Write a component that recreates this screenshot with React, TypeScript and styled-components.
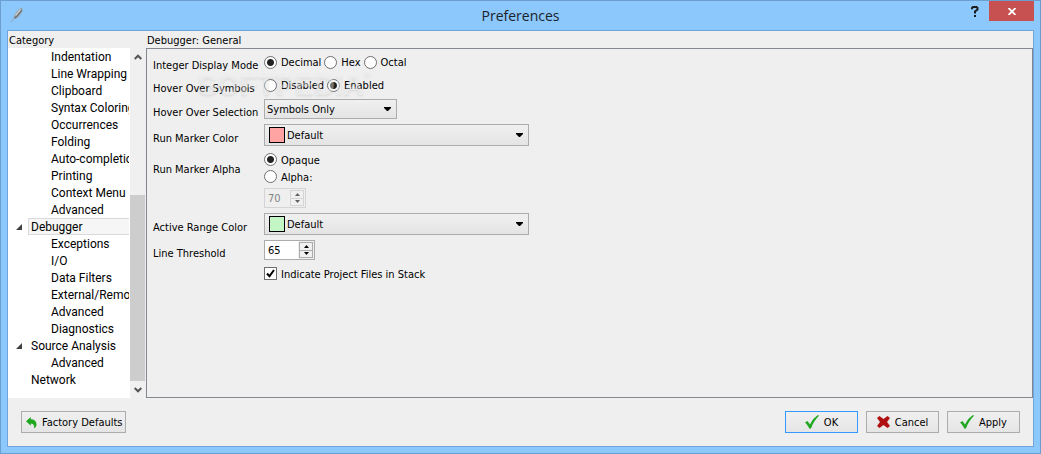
import React, { useState } from "react";
import styled, { createGlobalStyle } from "styled-components";

const GlobalStyle = createGlobalStyle`
  * { box-sizing: border-box; }
  body { margin: 0; }
  body, button, input, select {
    font-family: "DejaVu Sans Condensed", Tahoma, sans-serif;
    font-size: 11px;
    line-height: 14px;
    color: #000;
  }
`;

const Window = styled.div`
  display: flex;
  flex-direction: column;
  min-height: 100vh;
  padding: 0 6px 6px;
  border: 1px solid #6a9fd0;
  background: #8cc8fb;
`;

const TitleBar = styled.header`
  display: grid;
  grid-template-columns: 1fr auto 1fr;
  height: 29px;
`;

const TitleIcon = styled.svg`
  width: 16px;
  height: 18px;
  margin: 5px 2px;
`;

const Title = styled.h1`
  margin: 0;
  font: 400 14px/29px "Open Sans", "Segoe UI", sans-serif;
  color: #1a222b;
`;

const WindowControls = styled.div`
  display: flex;
  justify-content: flex-end;
  align-items: flex-start;
`;

const ControlButton = styled.button<{ $close?: boolean }>`
  display: flex;
  align-items: center;
  justify-content: center;
  width: ${(p) => (p.$close ? 45 : 28)}px;
  height: 20px;
  padding: 0;
  border: 0;
  background: ${(p) => (p.$close ? "#c75050" : "transparent")};
`;

const Client = styled.main`
  display: flex;
  flex-direction: column;
  flex: 1;
  border: 1px solid #6fa5dc;
  background: #efefef;
`;

const Columns = styled.div`
  display: flex;
  flex: 1;
`;

const Sidebar = styled.nav`
  display: flex;
  flex-direction: column;
  width: 138px;
  flex: none;
`;

const Heading = styled.h2`
  height: 17px;
  margin: 0;
  padding: 3px 1px 0;
  font-size: 11px;
  line-height: 14px;
  font-weight: 400;
`;

const TreeArea = styled.div`
  display: flex;
  flex: 1;
  padding-right: 1px;
`;

const Tree = styled.ul`
  flex: 1;
  min-width: 0;
  margin: 0;
  padding: 0 1px 0 0;
  list-style: none;
  overflow: hidden;
  background: #fff;
`;

const TreeItem = styled.li<{ $parent?: boolean }>`
  display: grid;
  grid-template-columns: ${(p) => (p.$parent ? 20 : 40)}px 1fr;
  align-items: center;
  height: 17px;
  overflow: hidden;
  white-space: nowrap;
`;

const TreeLink = styled.a<{ $selected?: boolean }>`
  height: 17px;
  padding: 0 2px;
  border: 1px solid ${(p) => (p.$selected ? "#dadada" : "transparent")};
  border-right: 0;
  background: ${(p) => (p.$selected ? "#f6f6f6" : "transparent")};
  font: 400 12px/16px Roboto, "Segoe UI", sans-serif;
  color: #000;
  text-decoration: none;
`;

const Twisty = styled.svg`
  width: 6px;
  height: 6px;
  margin-left: 8px;
`;

const ScrollBar = styled.div`
  display: flex;
  flex-direction: column;
  width: 15px;
  background: #f0f0f0;
`;

const ScrollButton = styled.button`
  display: flex;
  align-items: center;
  justify-content: center;
  height: 17px;
  padding: 0;
  border: 0;
  background: transparent;
`;

const Track = styled.div`
  display: flex;
  flex-direction: column;
  justify-content: flex-end;
  flex: 1;
`;

const Thumb = styled.div`
  height: 59%;
  background: #cdcdcd;
`;

const Content = styled.section`
  display: flex;
  flex-direction: column;
  flex: 1;
`;

const Panel = styled.form`
  position: relative;
  display: flex;
  flex-direction: column;
  gap: 5px;
  flex: 1;
  padding: 4px 6px;
  border: 1px solid #828790;
`;

const Row = styled.div<{ $top?: boolean }>`
  display: grid;
  grid-template-columns: 111px 1fr;
  align-items: ${(p) => (p.$top ? "start" : "center")};
`;

const RowLabel = styled.label<{ $top?: boolean }>`
  margin: ${(p) => (p.$top ? "12px 0 0" : "0 0 -2px")};
  padding-top: ${(p) => (p.$top ? 0 : 6)}px;
  white-space: nowrap;
`;

const Choices = styled.div`
  display: flex;
  align-items: center;
  gap: 3px;
  height: 18px;
`;

const Stack = styled.div`
  display: flex;
  flex-direction: column;
  align-items: flex-start;
`;

const Choice = styled.label`
  display: flex;
  align-items: center;
  gap: 4px;
  height: 17px;
  white-space: nowrap;
`;

const Caption = styled.span`
  padding-top: 2px;
`;

const Radio = styled.input.attrs({ type: "radio" })`
  appearance: none;
  width: 13px;
  height: 13px;
  margin: 0;
  border: 1px solid #707070;
  border-radius: 50%;
  background: #fff;
  &:checked {
    background: radial-gradient(circle, #222 0 3px, #fff 4px);
  }
`;

const CheckBox = styled.span`
  display: grid;
  width: 13px;
  height: 13px;
  > * {
    grid-area: 1 / 1;
  }
  > input {
    appearance: none;
    width: 13px;
    height: 13px;
    margin: 0;
    border: 1px solid #707070;
    background: #fff;
  }
  > svg {
    z-index: 1;
    pointer-events: none;
  }
  > input:not(:checked) + svg {
    visibility: hidden;
  }
`;

const SelectBox = styled.div<{ $wide?: boolean }>`
  position: relative;
  width: ${(p) => (p.$wide ? 265 : 133)}px;
  height: ${(p) => (p.$wide ? 22 : 20)}px;
`;

const Select = styled.select<{ $wide?: boolean }>`
  appearance: none;
  display: block;
  width: 100%;
  height: 100%;
  padding: 2px 20px 0 ${(p) => (p.$wide ? 22 : 2)}px;
  border: 1px solid #acacac;
  border-radius: 0;
  background: linear-gradient(#f0f0f0, #e4e4e4);
`;

const Arrow = styled.svg`
  position: absolute;
  top: 50%;
  right: 6px;
  width: 7px;
  height: 4px;
  margin-top: -2px;
  pointer-events: none;
`;

const Swatch = styled.span<{ $color: string }>`
  position: absolute;
  top: 3px;
  left: 5px;
  width: 16px;
  height: 16px;
  border: 1px solid #000;
  background: ${(p) => p.$color};
  pointer-events: none;
`;

const Spin = styled.div<{ $disabled?: boolean }>`
  display: flex;
  width: ${(p) => (p.$disabled ? 42 : 51)}px;
  height: 20px;
  margin-top: ${(p) => (p.$disabled ? 3 : 0)}px;
  border: 1px solid ${(p) => (p.$disabled ? "#d4d4d4" : "#acacac")};
  background: ${(p) => (p.$disabled ? "#efefef" : "#fff")};
`;

const SpinInput = styled.input`
  flex: 1;
  min-width: 0;
  padding: 2px 3px 0;
  border: 0;
  background: transparent;
  &:disabled {
    color: #838383;
  }
`;

const SpinButtons = styled.div`
  display: flex;
  flex-direction: column;
  width: 16px;
  padding: 1px;
  background: #efefef;
`;

const SpinButton = styled.button`
  display: flex;
  align-items: center;
  justify-content: center;
  flex: 1;
  padding: 0;
  border: 1px solid #acacac;
  background: #f0f0f0;
  &:disabled {
    border-color: #d4d4d4;
    color: #606060;
  }
  & + & {
    border-top: 0;
  }
`;

const Watermark = styled.div`
  position: absolute;
  top: 20px;
  left: 51px;
  display: flex;
  font: 700 29px/33px "Liberation Sans", Arial, sans-serif;
  color: rgba(255, 255, 255, 0.4);
  text-shadow: 0 1px 3px rgba(0, 0, 0, 0.1);
  pointer-events: none;
  sup {
    font-size: 9px;
    line-height: 12px;
  }
`;

const Footer = styled.footer`
  display: flex;
  gap: 8px;
  padding: 13px;
`;

const PushButton = styled.button<{ $primary?: boolean; $left?: boolean }>`
  display: flex;
  align-items: center;
  justify-content: center;
  gap: 5px;
  min-width: 73px;
  height: 22px;
  margin-right: ${(p) => (p.$left ? "auto" : 0)};
  padding: 0 2px 0 ${(p) => (p.$left ? 4 : 2)}px;
  border: 1px solid ${(p) => (p.$primary ? "#3399ff" : "#acacac")};
  background: linear-gradient(#f0f0f0, #e5e5e5);
  white-space: nowrap;
`;

type Node = { name: string; parent?: boolean; open?: boolean };

const nodes: Node[] = [
  { name: "Indentation" },
  { name: "Line Wrapping" },
  { name: "Clipboard" },
  { name: "Syntax Coloring" },
  { name: "Occurrences" },
  { name: "Folding" },
  { name: "Auto-completion" },
  { name: "Printing" },
  { name: "Context Menu" },
  { name: "Advanced" },
  { name: "Debugger", parent: true, open: true },
  { name: "Exceptions" },
  { name: "I/O" },
  { name: "Data Filters" },
  { name: "External/Remote" },
  { name: "Advanced" },
  { name: "Diagnostics" },
  { name: "Source Analysis", parent: true, open: true },
  { name: "Advanced" },
  { name: "Network", parent: true },
];

const Tick = () => (
  <svg width="14" height="14" viewBox="0 0 14 14" aria-hidden="true">
    <path d="M0 7.500 2.500 6 5 9.500C6.800 5.500 9.500 2.300 13 0L14 .8C10.500 4 7.800 8.500 6 13.500H4.200C3.200 11 1.800 9 0 7.500Z" fill="#1fa81f" />
  </svg>
);

const Cross = () => (
  <svg width="13" height="12" viewBox="0 0 13 12" aria-hidden="true">
    <path d="M0 2 2.500 0 6.500 3 10.500 0 13 2 10 6 13 10 10.500 12 6.500 9 2.500 12 0 10 3 6Z" fill="#b01010" />
  </svg>
);

const Undo = () => (
  <svg width="11" height="11" viewBox="0 0 11 11" aria-hidden="true">
    <path d="M0 4.200 4.800 0V2.200C8.800 2.200 11 4.800 10.400 8.400 10 9.800 9.200 10.600 8 11 8.400 8.600 7.600 6.700 4.800 6.600V8.800Z" fill="#1fa81f" />
  </svg>
);

const Triangle = ({ up }: { up?: boolean }) => (
  <svg width="5" height="3" viewBox="0 0 5 3" aria-hidden="true">
    <path d={up ? "M0 3 2.500 0 5 3Z" : "M0 0H5L2.500 3Z"} fill="currentColor" />
  </svg>
);

const Chevron = ({ up }: { up?: boolean }) => (
  <svg width="8" height="6" viewBox="0 0 8 6" aria-hidden="true">
    <path d={up ? "M.7 5 4 1.700 7.300 5" : "M.7 1 4 4.300 7.300 1"} fill="none" stroke="#555" strokeWidth="2" />
  </svg>
);

function DropDown({ id, options, color }: { id: string; options: string[]; color?: string }) {
  return (
    <SelectBox $wide={!!color}>
      <Select id={id} $wide={!!color}>
        {options.map((o) => (
          <option key={o}>{o}</option>
        ))}
      </Select>
      {color && <Swatch $color={color} />}
      <Arrow viewBox="0 0 7 4" aria-hidden="true">
        <path d="M0 0H7V1L4 4H3L0 1Z" />
      </Arrow>
    </SelectBox>
  );
}

function Spinner({ id, initial, label, disabled }: { id: string; initial: number; label?: string; disabled?: boolean }) {
  const [value, setValue] = useState(initial);
  return (
    <Spin $disabled={disabled}>
      <SpinInput
        id={id}
        inputMode="numeric"
        aria-label={label}
        value={value}
        disabled={disabled}
        onChange={(e) => setValue(Number(e.target.value) || 0)}
      />
      <SpinButtons>
        <SpinButton type="button" aria-label="Increase" disabled={disabled} onClick={() => setValue(value + 1)}>
          <Triangle up />
        </SpinButton>
        <SpinButton type="button" aria-label="Decrease" disabled={disabled} onClick={() => setValue(value - 1)}>
          <Triangle />
        </SpinButton>
      </SpinButtons>
    </Spin>
  );
}

function RadioChoice({ name, text, checked }: { name: string; text: string; checked?: boolean }) {
  return (
    <Choice>
      <Radio name={name} defaultChecked={checked} />
      <Caption>{text}</Caption>
    </Choice>
  );
}

export default function App() {
  return (
    <>
      <GlobalStyle />
      <Window>
        <TitleBar>
          <TitleIcon viewBox="0 0 16 18" aria-hidden="true">
            <path d="M2 16.500 5 12" stroke="#93a7b8" strokeWidth="1" />
            <path d="M4.500 12.500C5 8 9 3 13 1.500 14.500 3.500 11.500 10.500 6.500 13Z" fill="#9a9fa3" />
            <path d="M6 12.200 13 4" stroke="#666c70" strokeWidth="1.200" />
            <path d="M6.500 9.500 11.500 3.500" stroke="#c9d0d4" strokeWidth="1.200" />
          </TitleIcon>
          <Title>Preferences</Title>
          <WindowControls>
            <ControlButton aria-label="Help">
              <svg width="8" height="11" viewBox="0 0 8 11">
                <path d="M1 3.200V2L2 1H5.500L6.500 2V3.500L4 5.500V7.500M4 9V11" fill="none" stroke="#1c1c1c" strokeWidth="2" />
              </svg>
            </ControlButton>
            <ControlButton $close aria-label="Close">
              <svg width="8" height="7" viewBox="0 0 8 7">
                <path d="M.5 0 7.500 7M7.500 0 .5 7" stroke="#fff" strokeWidth="1.800" />
              </svg>
            </ControlButton>
          </WindowControls>
        </TitleBar>
        <Client>
          <Columns>
            <Sidebar>
              <Heading>Category</Heading>
              <TreeArea>
                <Tree>
                  {nodes.map((n, i) => (
                    <TreeItem key={i} $parent={n.parent}>
                      <span>
                        {n.open && (
                          <Twisty viewBox="0 0 6 6" aria-hidden="true">
                            <path d="M6 0V6H0Z" fill="#404040" />
                          </Twisty>
                        )}
                      </span>
                      <TreeLink href="#" $selected={n.name === "Debugger"}>
                        {n.name}
                      </TreeLink>
                    </TreeItem>
                  ))}
                </Tree>
                <ScrollBar>
                  <ScrollButton aria-label="Scroll up">
                    <Chevron up />
                  </ScrollButton>
                  <Track>
                    <Thumb />
                  </Track>
                  <ScrollButton aria-label="Scroll down">
                    <Chevron />
                  </ScrollButton>
                </ScrollBar>
              </TreeArea>
            </Sidebar>
            <Content>
              <Heading>Debugger: General</Heading>
              <Panel>
                <Row role="radiogroup" aria-labelledby="mode">
                  <RowLabel as="span" id="mode">Integer Display Mode</RowLabel>
                  <Choices>
                    <RadioChoice name="mode" text="Decimal" checked />
                    <RadioChoice name="mode" text="Hex" />
                    <RadioChoice name="mode" text="Octal" />
                  </Choices>
                </Row>
                <Row role="radiogroup" aria-labelledby="hover">
                  <RowLabel as="span" id="hover">Hover Over Symbols</RowLabel>
                  <Choices>
                    <RadioChoice name="hover" text="Disabled" />
                    <RadioChoice name="hover" text="Enabled" checked />
                  </Choices>
                </Row>
                <Row>
                  <RowLabel htmlFor="selection">Hover Over Selection</RowLabel>
                  <DropDown id="selection" options={["Symbols Only"]} />
                </Row>
                <Row>
                  <RowLabel htmlFor="marker">Run Marker Color</RowLabel>
                  <DropDown id="marker" options={["Default"]} color="#ffa3a3" />
                </Row>
                <Row $top role="radiogroup" aria-labelledby="alpha">
                  <RowLabel as="span" $top id="alpha">Run Marker Alpha</RowLabel>
                  <Stack>
                    <RadioChoice name="alpha" text="Opaque" checked />
                    <RadioChoice name="alpha" text="Alpha:" />
                    <Spinner id="alpha-value" label="Alpha" initial={70} disabled />
                  </Stack>
                </Row>
                <Row>
                  <RowLabel htmlFor="range">Active Range Color</RowLabel>
                  <DropDown id="range" options={["Default"]} color="#c4f5c4" />
                </Row>
                <Row>
                  <RowLabel htmlFor="threshold">Line Threshold</RowLabel>
                  <Spinner id="threshold" initial={65} />
                </Row>
                <Row>
                  <span />
                  <Choice>
                    <CheckBox>
                      <input type="checkbox" defaultChecked />
                      <svg width="13" height="13" viewBox="0 0 13 13" aria-hidden="true">
                        <path d="M3 6.500 5.500 9.200 10 3" fill="none" stroke="#000" strokeWidth="2" />
                      </svg>
                    </CheckBox>
                    <Caption>Indicate Project Files in Stack</Caption>
                  </Choice>
                </Row>
                <Watermark aria-hidden="true">
                  SOFTPEDIA<sup>®</sup>
                </Watermark>
              </Panel>
            </Content>
          </Columns>
          <Footer>
            <PushButton $left>
              <Undo />
              <Caption>Factory Defaults</Caption>
            </PushButton>
            <PushButton $primary>
              <Tick />
              <Caption>OK</Caption>
            </PushButton>
            <PushButton>
              <Cross />
              <Caption>Cancel</Caption>
            </PushButton>
            <PushButton>
              <Tick />
              <Caption>Apply</Caption>
            </PushButton>
          </Footer>
        </Client>
      </Window>
    </>
  );
}
